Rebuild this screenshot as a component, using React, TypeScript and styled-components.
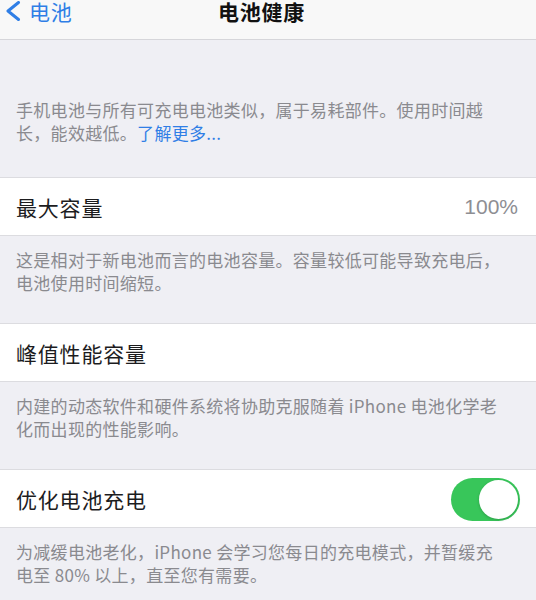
import styled, { createGlobalStyle } from "styled-components";

const GlobalStyle = createGlobalStyle`
  html, body {
    margin: 0;
    padding: 0;
    background: #efeff4;
  }
  body {
    font-family: "Noto Sans CJK SC", "Noto Sans", "Liberation Sans", sans-serif;
    -webkit-font-smoothing: antialiased;
  }
`;

const Page = styled.div`
  width: 536px;
  height: 600px;
  overflow: hidden;
  background: #efeff4;
`;

const NavBar = styled.div`
  height: 39px;
  background: #f8f8f8;
  border-bottom: 1px solid #d6d6da;
  display: grid;
  grid-template-columns: 1fr auto 1fr;
  align-items: start;
  padding-right: 13px;
`;

const BackButton = styled.div`
  display: flex;
  align-items: center;
  gap: 8px;
  padding-left: 5px;
  color: #2f7ee6;
  font-size: 21px;
  line-height: 24px;
  letter-spacing: 0.8px;
  margin-top: -1px;
`;

const Title = styled.div`
  font-size: 21px;
  font-weight: 600;
  line-height: 22px;
  color: #111;
  letter-spacing: 0.8px;
`;

const Note = styled.p<{ $top: number; $bottom: number }>`
  margin: 0;
  padding: ${(p) => p.$top}px 8px ${(p) => p.$bottom}px 16px;
  font-size: 17px;
  line-height: 23px;
  letter-spacing: 0.3px;
  color: #8a8a8f;
  white-space: nowrap;
`;

const Link = styled.span`
  color: #2f7ee6;
`;

const Row = styled.div`
  height: 57px;
  background: #fff;
  border-top: 1px solid #dcdce0;
  border-bottom: 1px solid #dcdce0;
  display: flex;
  align-items: center;
  justify-content: space-between;
  padding: 0 16px;
`;

const Label = styled.span`
  font-size: 21px;
  color: #1c1c1e;
  letter-spacing: 0.8px;
`;

const Value = styled.span`
  font-size: 21px;
  color: #8e8e93;
  font-family: "Liberation Sans", "Noto Sans", sans-serif;
  margin-right: 2px;
`;

const Switch = styled.div<{ $on: boolean }>`
  position: relative;
  width: 69px;
  height: 43px;
  border-radius: 22px;
  background: ${(p) => (p.$on ? "#38c65a" : "#e5e5ea")};
  margin-top: 2px;
`;

const Knob = styled.div<{ $on: boolean }>`
  position: absolute;
  top: 2px;
  left: ${(p) => (p.$on ? "28px" : "2px")};
  width: 39px;
  height: 39px;
  border-radius: 50%;
  background: #fff;
  box-shadow: 0 1px 3px rgba(0, 0, 0, 0.2);
`;

const Chevron = () => (
  <svg width="16" height="20" viewBox="0 0 16 20">
    <path
      d="M13.5 1.5 L3 10 L13.5 18.5"
      fill="none"
      stroke="#2f7ee6"
      strokeWidth="3"
      strokeLinecap="round"
      strokeLinejoin="round"
    />
  </svg>
);

export default function App() {
  return (
    <Page>
      <GlobalStyle />
      <NavBar>
        <BackButton>
          <Chevron />
          <span>电池</span>
        </BackButton>
        <Title>电池健康</Title>
        <div />
      </NavBar>

      <Note $top={58} $bottom={33}>
        手机电池与所有可充电电池类似，属于易耗部件。使用时间越
        <br />
        长，能效越低。<Link>了解更多...</Link>
      </Note>

      <Row>
        <Label>最大容量</Label>
        <Value>100%</Value>
      </Row>
      <Note $top={12} $bottom={29}>
        这是相对于新电池而言的电池容量。容量较低可能导致充电后，
        <br />
        电池使用时间缩短。
      </Note>

      <Row>
        <Label>峰值性能容量</Label>
      </Row>
      <Note $top={12} $bottom={29}>
        内建的动态软件和硬件系统将协助克服随着 iPhone 电池化学老
        <br />
        化而出现的性能影响。
      </Note>

      <Row>
        <Label>优化电池充电</Label>
        <Switch $on>
          <Knob $on />
        </Switch>
      </Row>
      <Note $top={12} $bottom={29}>
        为减缓电池老化，iPhone 会学习您每日的充电模式，并暂缓充
        <br />
        电至 80% 以上，直至您有需要。
      </Note>
    </Page>
  );
}
